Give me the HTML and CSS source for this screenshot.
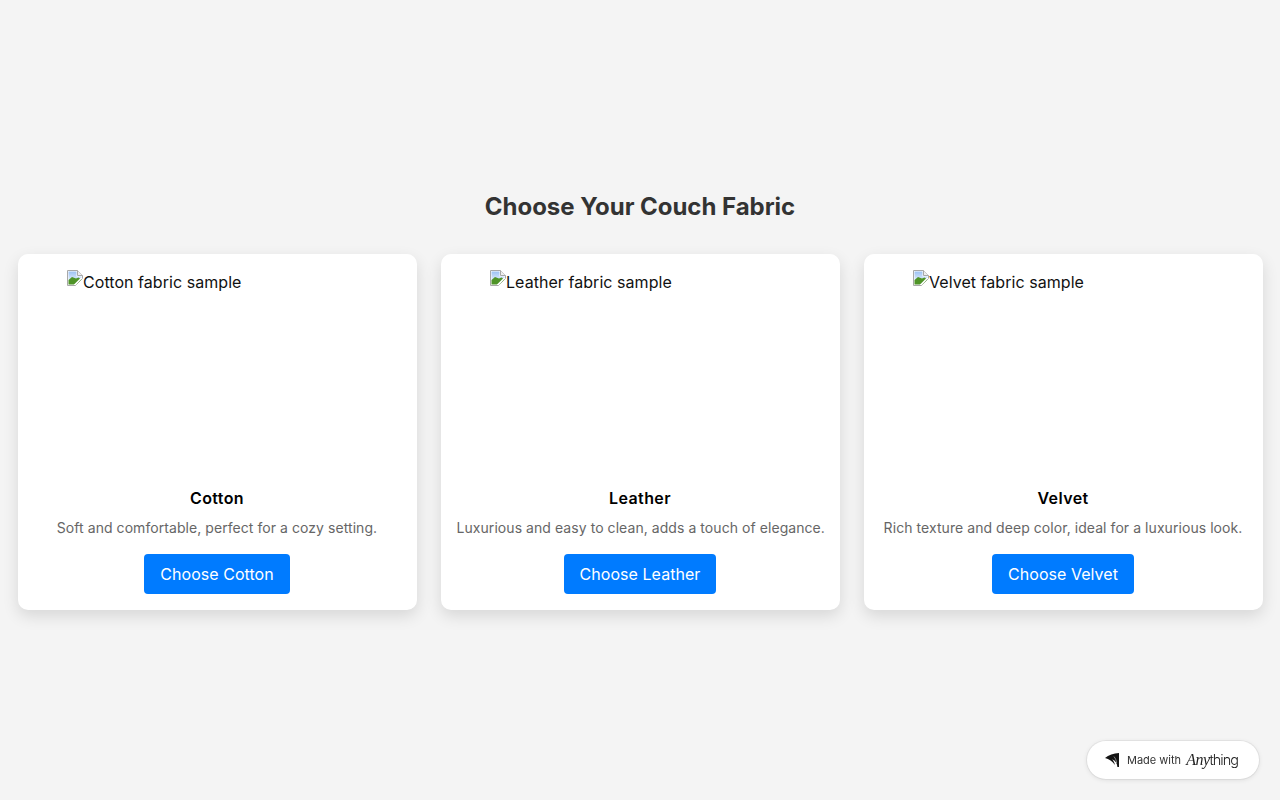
FILE: index.html
```html
<!DOCTYPE html>
<html lang="en">
<head>
    <meta charset="UTF-8">
    <meta name="viewport" content="width=device-width, initial-scale=1.0">
    <title>Choose Your Couch Fabric</title>
    <link rel="stylesheet" href="styles.css">
</head>
<body>

<svg class="defs" width="0" height="0">
    <defs>
        <linearGradient id="sky" x1="0" y1="0" x2="0" y2="1">
            <stop offset="0" stop-color="#9cc2f4"/>
            <stop offset="1" stop-color="#e2edfb"/>
        </linearGradient>
        <symbol id="broken-image" viewBox="0 0 16 16">
            <path d="M0.5 15.5V0.5H10.5L15.5 5.5V8.5L8.5 15.5Z" fill="#fff" stroke="#a8a8a8"/>
            <path d="M10.5 0.5V5.5H15.5" fill="#eee" stroke="#a8a8a8"/>
            <path d="M1.5 1.5H9.5V6.5H14.5V9L13 10.5L1.5 10.5Z" fill="url(#sky)"/>
            <path d="M1.5 14.5V10L5 7L9 8.5L11.5 7.5L14.5 9.5L9.5 14.5Z" fill="#4f9428"/>
            <path d="M7 14.5L13.5 8L15.5 8L9 15L7 15Z" fill="#fff"/>
        </symbol>
    </defs>
</svg>

<div class="page">
    <h1 class="title">Choose Your Couch Fabric</h1>
    <div class="cards">
        <div class="card">
            <div class="sample">
                <svg class="broken" width="16" height="16"><use href="#broken-image"/></svg>Cotton fabric sample
            </div>
            <h2 class="name">Cotton</h2>
            <p class="desc">Soft and comfortable, perfect for a cozy setting.</p>
            <button class="choose">Choose Cotton</button>
        </div>
        <div class="card">
            <div class="sample">
                <svg class="broken" width="16" height="16"><use href="#broken-image"/></svg>Leather fabric sample
            </div>
            <h2 class="name">Leather</h2>
            <p class="desc">Luxurious and easy to clean, adds a touch of elegance.</p>
            <button class="choose">Choose Leather</button>
        </div>
        <div class="card">
            <div class="sample">
                <svg class="broken" width="16" height="16"><use href="#broken-image"/></svg>Velvet fabric sample
            </div>
            <h2 class="name">Velvet</h2>
            <p class="desc">Rich texture and deep color, ideal for a luxurious look.</p>
            <button class="choose">Choose Velvet</button>
        </div>
    </div>
</div>

<a class="made-with" href="#">
    <svg class="made-logo" width="14" height="14" viewBox="0 0 14 14">
        <path d="M0 5C3.6 2 8.6 0.4 14 0V14H12.4C12.2 10.4 10.4 7.6 7.2 6.2C8.6 8 9.6 9.8 10 12C7.6 8.6 4 6 0 5Z" fill="#141414"/>
        <path d="M9 3.6C10.6 5.6 11.4 7.6 11.6 10" fill="none" stroke="#fff" stroke-width="0.5"/>
    </svg>
    <span class="made-text">Made with</span>
    <span class="made-brand"><em>Any</em>thing</span>
</a>

</body>
</html>
```

FILE: styles.css
```css
* {
    box-sizing: border-box;
}
body {
    margin: 0;
    height: 800px;
    overflow: hidden;
    background-color: #f4f4f4;
    font-family: Inter, "Liberation Sans", sans-serif;
    color: #000;
}
.defs {
    position: absolute;
}
.page {
    height: 100%;
    display: flex;
    flex-direction: column;
    justify-content: center;
    padding: 0 17.5px;
}
.title {
    margin: 0 0 31px;
    padding-top: 1px;
    font-size: 24px;
    line-height: 32px;
    font-weight: 700;
    letter-spacing: -0.03px;
    text-align: center;
    color: #333;
}
.cards {
    display: flex;
    gap: 24px;
}
.card {
    flex: 1;
    min-width: 0;
    padding: 16px;
    background-color: #fff;
    border-radius: 10px;
    box-shadow: 0 6px 16px rgba(0, 0, 0, 0.12);
    text-align: center;
}
.sample {
    width: 300px;
    height: 200px;
    margin: 0 auto 16px;
    text-align: left;
    font-size: 16px;
    line-height: 24px;
    letter-spacing: 0.05px;
    color: #111;
}
.broken {
    vertical-align: 2px;
}
.name {
    margin: 0 0 8px;
    font-size: 16px;
    line-height: 24px;
    font-weight: 600;
    letter-spacing: 0.4px;
}
.desc {
    margin: 0 0 16px;
    font-size: 14px;
    line-height: 20px;
    letter-spacing: 0.06px;
    color: #666;
    white-space: nowrap;
}
.choose {
    height: 40px;
    padding: 0 16px;
    border: none;
    border-radius: 4px;
    background-color: #007bff;
    color: #fff;
    font-family: inherit;
    font-size: 16px;
    letter-spacing: 0.05px;
    cursor: pointer;
    display: inline-block;
    vertical-align: top;
}
.made-with {
    position: fixed;
    right: 21px;
    bottom: 21px;
    width: 172px;
    height: 38px;
    display: flex;
    align-items: center;
    padding-left: 18px;
    background-color: #fff;
    border-radius: 19px;
    box-shadow: 0 0 0 1px rgba(0, 0, 0, 0.05), 0 1px 5px rgba(0, 0, 0, 0.1);
    text-decoration: none;
    color: #333;
}
.made-logo {
    margin-right: 8px;
}
.made-text {
    font-size: 11px;
    margin-right: 5px;
}
.made-brand {
    font-size: 14.5px;
    letter-spacing: -1px;
    font-weight: 300;
    color: #222;
}
.made-brand em {
    font-family: "Liberation Serif", serif;
    font-size: 16px;
    letter-spacing: -0.5px;
}
```
